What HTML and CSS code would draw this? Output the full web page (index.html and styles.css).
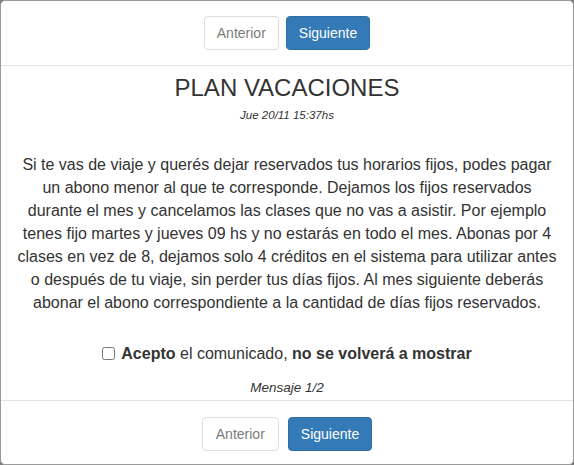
FILE: index.html
```html
<!DOCTYPE html>
<html lang="es">
<head>
<meta charset="utf-8">
<title>Plan vacaciones</title>
<link rel="stylesheet" href="styles.css">
</head>
<body>
<div class="modal">
  <div class="modal-nav modal-nav-top">
    <button class="btn btn-default" disabled>Anterior</button>
    <button class="btn btn-primary">Siguiente</button>
  </div>
  <div class="modal-body">
    <h3 class="title">PLAN VACACIONES</h3>
    <div class="date">Jue 20/11 15:37hs</div>
    <p class="message">Si te vas de viaje y querés dejar reservados tus horarios fijos, podes pagar<br>un abono menor al que te corresponde. Dejamos los fijos reservados<br>durante el mes y cancelamos las clases que no vas a asistir. Por ejemplo<br>tenes fijo martes y jueves 09 hs y no estarás en todo el mes. Abonas por 4<br>clases en vez de 8, dejamos solo 4 créditos en el sistema para utilizar antes<br>o después de tu viaje, sin perder tus días fijos. Al mes siguiente deberás<br>abonar el abono correspondiente a la cantidad de días fijos reservados.</p>
    <label class="accept"><input type="checkbox" class="accept-box"><b>Acepto</b> el comunicado, <b>no se volverá a mostrar</b></label>
    <div class="counter">Mensaje 1/2</div>
  </div>
  <div class="modal-nav modal-nav-bottom">
    <button class="btn btn-default wide" disabled>Anterior</button>
    <button class="btn btn-primary">Siguiente</button>
  </div>
</div>
</body>
</html>
```
FILE: styles.css
```css
html, body {
  margin: 0;
  padding: 0;
}
body {
  background: #7d7d7d;
  font-family: "Liberation Sans", Arial, Helvetica, sans-serif;
  color: #333;
}
.modal {
  box-sizing: border-box;
  width: 574px;
  height: 465px;
  background: #fff;
  border: 1px solid #9a9a9a;
  border-radius: 5px;
  display: flex;
  flex-direction: column;
  overflow: hidden;
}
.modal-nav {
  display: flex;
  justify-content: center;
  gap: 7px;
  padding: 15px;
}
.modal-nav-top {
  border-bottom: 1px solid #e5e5e5;
}
.modal-nav-bottom {
  border-top: 1px solid #e5e5e5;
  gap: 9px;
  padding-top: 16px;
  padding-bottom: 13px;
}
.btn {
  box-sizing: border-box;
  height: 34px;
  padding: 6px 12px;
  font-family: inherit;
  font-size: 14px;
  line-height: 20px;
  border: 1px solid transparent;
  border-radius: 4px;
  margin: 0;
  cursor: pointer;
}
.btn-default {
  background: #fff;
  color: #333;
  border-color: #ccc;
}
.btn-default[disabled] {
  opacity: 0.65;
  cursor: not-allowed;
}
.btn-default.wide {
  padding: 6px 13px;
}
.btn-primary {
  background: #337ab7;
  border-color: #2e6da4;
  color: #fff;
}
.modal-body {
  flex: 1;
  padding: 9px 15px 3px;
  text-align: center;
  display: flex;
  flex-direction: column;
  align-items: center;
}
.title {
  margin: 0;
  font-size: 24px;
  font-weight: 500;
  line-height: 26px;
}
.date {
  margin-top: 6px;
  font-size: 11.5px;
  line-height: 17px;
  font-style: italic;
}
.message {
  margin: 29px 0 0;
  font-size: 16px;
  line-height: 23px;
}
.accept {
  margin-top: 28px;
  font-size: 16px;
  line-height: 23px;
  display: block;
}
.accept-box {
  width: 13px;
  height: 13px;
  margin: 0 6px 0 0;
  vertical-align: -1px;
}
.counter {
  margin-top: 13px;
  font-size: 13.5px;
  line-height: 19px;
  font-style: italic;
}
```
